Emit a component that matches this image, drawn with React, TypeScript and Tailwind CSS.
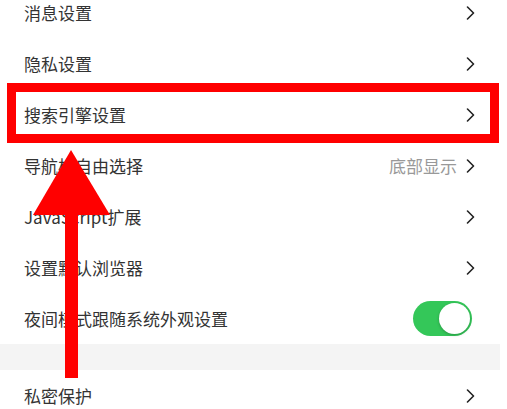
import { ReactNode } from 'react';

function Chevron() {
  return (
    <svg width="9" height="14" viewBox="0 0 9 14" fill="none">
      <polyline points="1.5,1 7.5,7 1.5,13" stroke="#222" strokeWidth="1.6" strokeLinecap="round" strokeLinejoin="round" />
    </svg>
  );
}

function Row({ label, right }: { label: string; right?: ReactNode }) {
  return (
    <div className="h-[51px] flex items-center justify-between pl-6 pr-[25px]">
      <span className="text-[17px] text-[#333]">{label}</span>
      {right ?? <Chevron />}
    </div>
  );
}

function Toggle() {
  return (
    <div className="mr-[3px] w-[59px] h-[35px] rounded-full bg-[#34c759] p-[2px] flex justify-end">
      <div className="w-[31px] h-[31px] rounded-full bg-white shadow-[0_1px_3px_rgba(0,0,0,0.25)]" />
    </div>
  );
}

export default function App() {
  return (
    <div
      className="relative w-[507px] h-[409px] overflow-hidden bg-white"
      style={{ fontFamily: '"Noto Sans CJK SC", "Noto Sans", sans-serif' }}
    >
      <div className="w-[500px] -mt-[13px]">
        <Row label="消息设置" />
        <Row label="隐私设置" />
        <Row label="搜索引擎设置" />
        <Row
          label="导航栏自由选择"
          right={
            <div className="flex items-center gap-[9px]">
              <span className="text-[17px] text-[#999]">底部显示</span>
              <Chevron />
            </div>
          }
        />
        <Row label="JavaScript扩展" />
        <Row label="设置默认浏览器" />
        <Row label="夜间模式跟随系统外观设置" right={<Toggle />} />
        <div className="h-[26px] bg-[#f4f4f4]" />
        <Row label="私密保护" />
      </div>

      {/* highlight box */}
      <div className="absolute left-[7px] top-[83px] w-[492px] h-[60px] border-[9px] border-[#ff0000]" />

      {/* arrow */}
      <svg className="absolute left-0 top-0 pointer-events-none" width="507" height="409" viewBox="0 0 507 409">
        <polygon points="71,150 33,215 110,215" fill="#ff0000" />
        <rect x="65" y="214" width="13" height="164" fill="#ff0000" />
      </svg>
    </div>
  );
}
